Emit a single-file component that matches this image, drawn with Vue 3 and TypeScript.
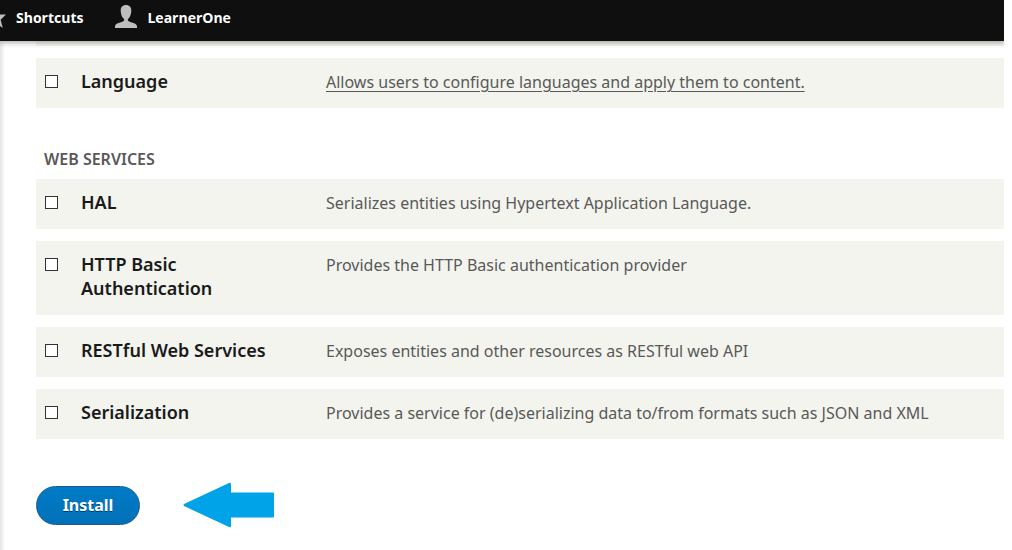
<script setup lang="ts">
interface Module {
  id: string
  name: string
  description: string
  link?: boolean
}

interface ModuleGroup {
  title: string
  modules: Module[]
}

const groups: ModuleGroup[] = [
  {
    title: '',
    modules: [
      {
        id: 'language',
        name: 'Language',
        description: 'Allows users to configure languages and apply them to content.',
        link: true,
      },
    ],
  },
  {
    title: 'Web Services',
    modules: [
      { id: 'hal', name: 'HAL', description: 'Serializes entities using Hypertext Application Language.' },
      { id: 'basic-auth', name: 'HTTP Basic Authentication', description: 'Provides the HTTP Basic authentication provider' },
      { id: 'rest', name: 'RESTful Web Services', description: 'Exposes entities and other resources as RESTful web API' },
      {
        id: 'serialization',
        name: 'Serialization',
        description: 'Provides a service for (de)serializing data to/from formats such as JSON and XML',
      },
    ],
  },
]
</script>

<template>
  <div class="page">
    <nav class="toolbar">
      <a href="#" class="tab shortcuts">
        <svg class="star" viewBox="0 0 20 20" aria-hidden="true">
          <path d="M10 0l2.600 6.500L20 6.600l-5.400 5.200L16.800 20 10 15.300 3.200 20l2.200-8.200L0 6.600l7.400-.1z" />
        </svg>
        <span>Shortcuts</span>
      </a>
      <a href="#" class="tab">
        <svg class="person" viewBox="0 0 22 23" aria-hidden="true">
          <path
            d="M11 0C7.500 0 5.700 2.300 5.700 5.500c0 3.600 1.200 6.600 2.800 8 .8.7.9 1.800.2 2.500C7 17.800 0 17.800 0 21.500V23h22v-1.500c0-3.700-7-3.700-8.700-5.500-.7-.7-.6-1.800.2-2.500 1.600-1.400 2.800-4.400 2.800-8C16.300 2.300 14.500 0 11 0z"
          />
        </svg>
        <span>LearnerOne</span>
      </a>
    </nav>

    <form class="content" @submit.prevent>
      <div class="previous-row"></div>
      <section v-for="group in groups" :key="group.title" class="group">
        <h2 v-if="group.title">{{ group.title }}</h2>
        <table>
          <tbody>
            <tr v-for="item in group.modules" :key="item.id">
              <td class="check"><input :id="item.id" type="checkbox" /></td>
              <th scope="row"><label :for="item.id">{{ item.name }}</label></th>
              <td class="description">
                <a v-if="item.link" href="#">{{ item.description }}</a>
                <template v-else>{{ item.description }}</template>
              </td>
            </tr>
          </tbody>
        </table>
      </section>

      <div class="actions">
        <button type="submit">Install</button>
        <svg class="arrow" viewBox="0 0 92 46" aria-hidden="true">
          <path d="M1 22L46 1q2-1 2 1v8.500h42q1 0 1 1v23q0 1-1 1H48V44q0 2-2 1L1 24q-1-1 0-2z" />
        </svg>
      </div>
    </form>
  </div>
</template>

<style>
body {
  margin: 0;
  background: #fff;
}
</style>

<style scoped>
.page {
  min-height: 100vh;
  box-sizing: border-box;
  margin-right: 8px;
  overflow-x: clip;
  background: linear-gradient(to right, #e4e4e4, #fff 5px);
  font-family: "Noto Sans", "Open Sans", sans-serif;
  font-size: 16px;
  line-height: 24px;
  color: #595959;
}

.toolbar {
  position: relative;
  display: flex;
  gap: 32px;
  height: 41px;
  background: #0f0f0f;
  box-shadow: 0 0 6px 1px rgba(0, 0, 0, 0.4);
}

.tab {
  display: flex;
  gap: 10px;
  height: 36px;
  align-items: center;
  color: #fff;
  font-family: "Open Sans", sans-serif;
  font-size: 14px;
  font-weight: 700;
  text-decoration: none;
}

.shortcuts {
  margin-left: -14px;
}

.tab svg {
  fill: #bebebe;
}

.star {
  width: 20px;
  height: 20px;
}

.person {
  width: 22px;
  height: 23px;
  align-self: flex-start;
  margin-top: 5px;
}

.content {
  padding-left: 36px;
}

.previous-row {
  height: 5px;
  margin-bottom: 12px;
  background: #f3f4ee;
}

.group {
  margin-bottom: 39px;
}

h2 {
  margin: 0;
  padding: 0 8px 8px;
  font-size: 16px;
  font-weight: 600;
  text-transform: uppercase;
}

table {
  width: 100%;
  border-collapse: collapse;
  table-layout: fixed;
}

tr {
  background: #f3f4ee;
}

tr + tr {
  border-top: 12px solid #fff;
}

td,
th {
  padding: 12px 0 14px;
  text-align: left;
  vertical-align: top;
}

.check {
  width: 45px;
}

.check input {
  display: block;
  box-sizing: border-box;
  width: 13px;
  height: 13px;
  margin: 5px 0 0 9px;
  appearance: none;
  border: 1px solid #333;
  background: #fff;
}

th {
  width: 245px;
  padding: 11px 0 15px;
  color: #1a1a1a;
  font-size: 18px;
  font-weight: 600;
}

th label {
  display: block;
  max-width: 200px;
}

.description a {
  color: inherit;
  text-underline-offset: 3px;
}

.actions {
  display: flex;
  align-items: center;
  gap: 43px;
  padding-top: 4px;
}

button {
  min-width: 104px;
  height: 39px;
  padding: 0 24px;
  border: 1px solid #1e5c90;
  border-radius: 20px;
  background: linear-gradient(#007bc6, #0071b8);
  color: #fff;
  font: 700 16px/24px "Noto Sans", sans-serif;
  text-shadow: 0 1px rgba(0, 0, 0, 0.5);
}

.arrow {
  width: 92px;
  height: 46px;
  fill: #00a2e8;
}
</style>
